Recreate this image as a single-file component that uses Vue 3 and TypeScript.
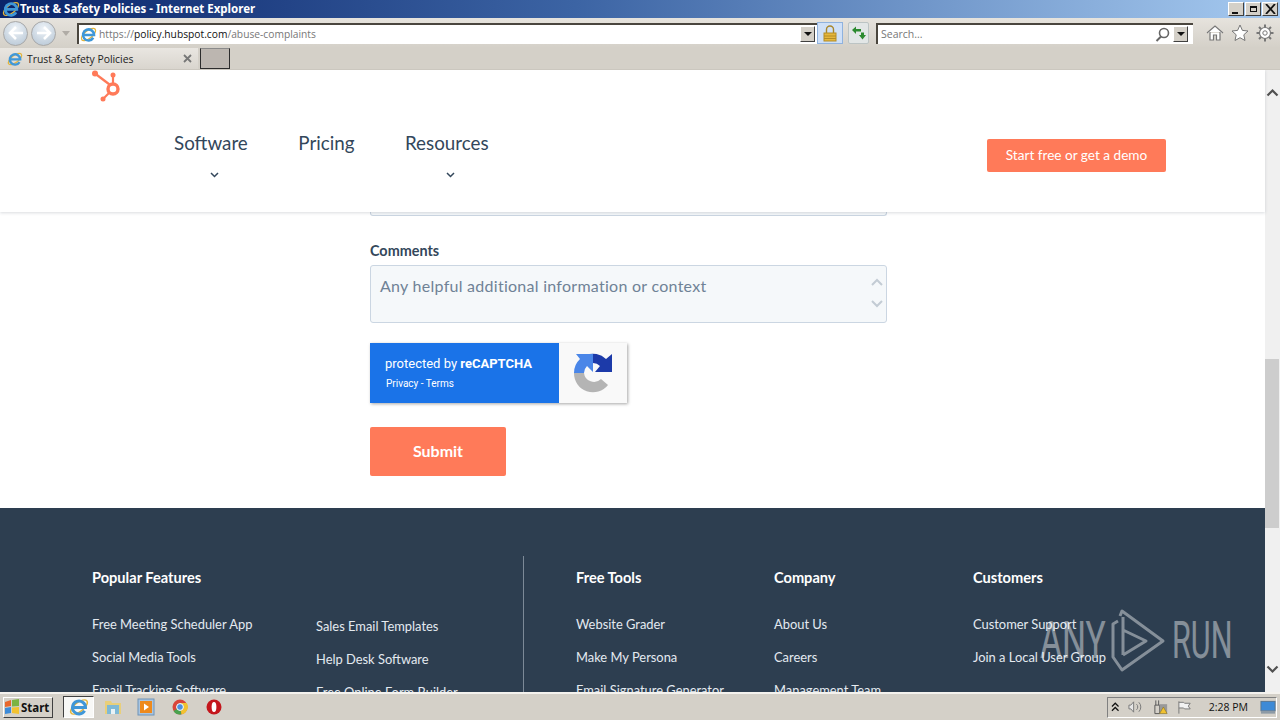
<script setup lang="ts">
const navItems = [
  { label: "Software", menu: true },
  { label: "Pricing", menu: false },
  { label: "Resources", menu: true },
];

const featuresA = ["Free Meeting Scheduler App", "Social Media Tools", "Email Tracking Software"];
const featuresB = ["Sales Email Templates", "Help Desk Software", "Free Online Form Builder"];

const footerCols = [
  { title: "Free Tools", width: 198, links: ["Website Grader", "Make My Persona", "Email Signature Generator"] },
  { title: "Company", width: 199, links: ["About Us", "Careers", "Management Team"] },
  { title: "Customers", width: 200, links: ["Customer Support", "Join a Local User Group"] },
];
</script>

<template>
  <div class="window">
    <svg class="defs" width="0" height="0">
      <symbol id="ie" viewBox="0 0 20 20">
        <ellipse cx="10" cy="10" rx="10" ry="4.500" transform="rotate(-38 10 10)" fill="none" stroke="#e3b53c" stroke-width="1.500" />
        <path d="M15.600 13.800A6.500 6.500 0 1 1 16.500 10.500H4" fill="none" stroke="#3f97d8" stroke-width="3" />
      </symbol>
    </svg>

    <div class="titlebar">
      <svg class="title-ie" width="18" height="18"><use href="#ie" /></svg>
      <span class="title-text">Trust &amp; Safety Policies - Internet Explorer</span>
      <div class="win-buttons">
        <span class="win-btn"><i class="min-glyph"></i></span>
        <span class="win-btn"><i class="max-glyph"></i></span>
        <span class="win-btn close-btn">
          <svg width="11" height="10" viewBox="0 0 11 10"><path d="M1 0l9 10M10 0L1 10" stroke="#111" stroke-width="1.800" /></svg>
        </span>
      </div>
    </div>

    <div class="toolbar">
      <div class="nav-orbs">
        <span class="orb">
          <svg width="16" height="14" viewBox="0 0 16 14"><path d="M8 1L2 7l6 6M2 7h13" fill="none" stroke="#fff" stroke-width="2.600" /></svg>
        </span>
        <span class="orb">
          <svg width="16" height="14" viewBox="0 0 16 14"><path d="M8 1l6 6-6 6M14 7H1" fill="none" stroke="#fff" stroke-width="2.600" /></svg>
        </span>
        <span class="orb-drop"></span>
      </div>
      <div class="addr-box">
        <svg width="17" height="17"><use href="#ie" /></svg>
        <span class="addr-text"><span class="dim">https://</span>policy.<b>hubspot.com</b><span class="dim">/abuse-complaints</span></span>
        <span class="drop-btn"><i></i></span>
      </div>
      <span class="lock-btn">
        <svg width="14" height="17" viewBox="0 0 14 17">
          <path d="M3.500 8V4.500a3.500 3.500 0 0 1 7 0V8" fill="none" stroke="#a8862c" stroke-width="1.400" />
          <rect x="1" y="8" width="12" height="8" fill="#e6b73c" stroke="#b48c26" />
          <path d="M1 11h12M1 13.500h12" stroke="#b48c26" />
        </svg>
      </span>
      <span class="refresh-btn">
        <svg width="16" height="14" viewBox="0 0 16 14">
          <path d="M1 4l4-3.500V3h5v2.500H5V8z" fill="#2c8a2f" />
          <path d="M15 9l-3.500 4.500L8 9h2V6.500h3V9z" fill="#2c8a2f" />
        </svg>
      </span>
      <div class="search-box">
        <span class="search-text">Search...</span>
        <svg class="search-icon" width="15" height="15" viewBox="0 0 15 15">
          <circle cx="9" cy="6" r="4.500" fill="none" stroke="#666" stroke-width="1.600" />
          <path d="M6 9.500L1.500 14" stroke="#666" stroke-width="2" />
        </svg>
        <span class="drop-btn"><i></i></span>
      </div>
      <div class="tool-icons">
        <svg width="18" height="18" viewBox="0 0 18 18">
          <path d="M1 9l8-7 8 7M4 8v8h3.500v-5h3v5H14V8" fill="#fff" stroke="#777" stroke-width="1.200" />
        </svg>
        <svg width="18" height="18" viewBox="0 0 18 18">
          <path d="M9 1l2.400 5.400 5.600.6-4.200 3.800 1.200 5.700L9 13.700 4 16.500l1.200-5.700L1 7l5.600-.6z" fill="#fff" stroke="#777" />
        </svg>
        <svg width="18" height="18" viewBox="0 0 18 18">
          <circle cx="9" cy="9" r="5.500" fill="#fff" stroke="#777" stroke-width="1.200" />
          <circle cx="9" cy="9" r="2.200" fill="none" stroke="#777" />
          <path d="M9 0.500v3M9 14.500v3M0.500 9h3M14.500 9h3M3 3l2 2M13 13l2 2M15 3l-2 2M5 13l-2 2" stroke="#777" stroke-width="2" />
        </svg>
      </div>
    </div>

    <div class="tabrow">
      <div class="tab">
        <svg width="16" height="16"><use href="#ie" /></svg>
        <span class="tab-title">Trust &amp; Safety Policies</span>
        <svg class="tab-close" width="9" height="9" viewBox="0 0 9 9"><path d="M1 1l7 7M8 1L1 8" stroke="#777" stroke-width="1.800" /></svg>
      </div>
      <div class="new-tab"></div>
    </div>

    <div class="viewport">
      <div class="page">
        <header class="site-header">
          <svg class="hs-logo" width="32" height="34" viewBox="0 0 32 34">
            <g fill="none" stroke="#ff7a59">
              <circle cx="22" cy="19" r="5" stroke-width="3.400" />
              <path d="M4 3.500l14.500 11" stroke-width="2.200" />
              <path d="M22 5v9" stroke-width="2.200" />
              <path d="M12 29l6.500-6.500" stroke-width="2.200" />
            </g>
            <g fill="#ff7a59">
              <circle cx="4" cy="3.500" r="3" />
              <circle cx="22" cy="5" r="2.500" />
              <circle cx="12" cy="29" r="2.500" />
            </g>
          </svg>
          <nav class="main-nav">
            <div v-for="item in navItems" :key="item.label" class="nav-item">
              <span class="nav-label">{{ item.label }}</span>
              <svg v-if="item.menu" class="nav-chevron" width="9" height="6" viewBox="0 0 9 6">
                <path d="M1 1l3.500 3.500L8 1" fill="none" stroke="#33475b" stroke-width="1.500" />
              </svg>
            </div>
          </nav>
          <a class="cta">Start free or get a demo</a>
        </header>

        <section class="form-area">
          <div class="input-stub"></div>
          <label class="field-label">Comments</label>
          <div class="textarea">
            <span>Any helpful additional information or context</span>
            <div class="ta-arrows">
              <svg width="12" height="8" viewBox="0 0 12 8"><path d="M1 7l5-5 5 5" fill="none" stroke="#c3ccd4" stroke-width="2" /></svg>
              <svg width="12" height="8" viewBox="0 0 12 8"><path d="M1 1l5 5 5-5" fill="none" stroke="#c3ccd4" stroke-width="2" /></svg>
            </div>
          </div>
          <div class="recaptcha">
            <div class="rc-blue">
              <div class="rc-line">protected by <b>reCAPTCHA</b></div>
              <div class="rc-links">Privacy - Terms</div>
            </div>
            <div class="rc-logo">
              <svg width="42" height="42" viewBox="0 0 42 42">
                <path d="M14 3A19 19 0 0 1 34 7l6-5v18H23l5-6a10 10 0 0 0-7-3z" fill="#1c3aa9" />
                <path d="M2 21A19 19 0 0 1 8 7L4 2h17v18l-6-6a10 10 0 0 0-3 7z" fill="#4a86e8" />
                <path d="M2 21h10a10 10 0 0 0 17 6l7 6A19 19 0 0 1 2 21z" fill="#b4b4b4" />
              </svg>
            </div>
          </div>
          <button class="submit">Submit</button>
        </section>

        <footer class="site-footer">
          <div class="features">
            <h4>Popular Features</h4>
            <div class="feature-cols">
              <ul>
                <li v-for="link in featuresA" :key="link">{{ link }}</li>
              </ul>
              <ul class="offset-list">
                <li v-for="link in featuresB" :key="link">{{ link }}</li>
              </ul>
            </div>
          </div>
          <div class="footer-rule"></div>
          <div v-for="col in footerCols" :key="col.title" class="footer-col" :style="{ width: col.width + 'px' }">
            <h4>{{ col.title }}</h4>
            <ul>
              <li v-for="link in col.links" :key="link">{{ link }}</li>
            </ul>
          </div>
        </footer>
      </div>

      <div class="scrollbar">
        <svg class="sb-arrow" width="13" height="9" viewBox="0 0 13 9"><path d="M1.500 7.500l5-5 5 5" fill="none" stroke="#505050" stroke-width="2.200" /></svg>
        <div class="sb-thumb"></div>
        <svg class="sb-arrow" width="13" height="9" viewBox="0 0 13 9"><path d="M1.500 1.500l5 5 5-5" fill="none" stroke="#505050" stroke-width="2.200" /></svg>
      </div>

      <div class="watermark">
        <span class="wm-word wm-any">ANY</span>
        <svg class="wm-logo" width="60" height="66" viewBox="0 0 60 66">
          <path d="M10 13L5 16v33l9 13 41-29L14 3l-2 5" fill="none" stroke="#fff" stroke-width="3" stroke-linejoin="round" />
          <path d="M15 9v26M15 47V22l23 11-23 14" fill="none" stroke="#fff" stroke-width="3" stroke-linejoin="round" />
        </svg>
        <span class="wm-word">RUN</span>
      </div>
    </div>

    <div class="taskbar">
      <button class="start">
        <svg width="16" height="16" viewBox="0 0 16 16">
          <path d="M1 3l6-2v6l-6 1z" fill="#e8672c" />
          <path d="M8 1l7-1v7l-7 .5z" fill="#7cb342" />
          <path d="M1 9l6-1v6l-6 1z" fill="#3d8bd8" />
          <path d="M8 8.500l7-.5v7l-7-1z" fill="#f2c230" />
        </svg>
        <span>Start</span>
      </button>
      <div class="task-active"><svg width="20" height="20"><use href="#ie" /></svg></div>
      <div class="task-icon">
        <svg width="18" height="18" viewBox="0 0 18 18">
          <path d="M1 3h6l1 2h9v11H1z" fill="#e9cf7a" />
          <path d="M3 7h12v9H3z" fill="#7fb9d6" />
          <path d="M7 11h4v5H7z" fill="#e9f2f6" />
        </svg>
      </div>
      <div class="task-icon">
        <svg width="18" height="18" viewBox="0 0 18 18">
          <rect x="1" y="1" width="16" height="16" fill="#a9c5e0" stroke="#6f93b8" />
          <rect x="3" y="3" width="12" height="12" fill="#ee8a1d" />
          <path d="M7 5.500l5 3.500-5 3.500z" fill="#fff" />
        </svg>
      </div>
      <div class="task-icon">
        <svg width="16" height="16" viewBox="0 0 16 16">
          <circle cx="8" cy="8" r="7.500" fill="#d9443a" />
          <path d="M8 8L1.500 12a7.500 7.500 0 0 0 8 3.300z" fill="#4aa24e" />
          <path d="M8 4h6.800a7.500 7.500 0 0 1-5.300 11.300L8 8z" fill="#f2c230" />
          <circle cx="8" cy="8" r="3.400" fill="#4d8fe0" stroke="#fff" />
        </svg>
      </div>
      <div class="task-icon">
        <svg width="16" height="16" viewBox="0 0 16 16">
          <circle cx="8" cy="8" r="7.500" fill="#c4161c" />
          <ellipse cx="8" cy="8" rx="2.400" ry="5" fill="#fff" />
        </svg>
      </div>
      <div class="tray">
        <svg width="9" height="10" viewBox="0 0 9 10"><path d="M1 4.500l3.500-3.500L8 4.500M1 9l3.500-3.500L8 9" fill="none" stroke="#111" stroke-width="1.300" /></svg>
        <svg width="16" height="14" viewBox="0 0 16 14">
          <path d="M1 5h2l3-3.500v11L3 9H1z" fill="#e6e6e6" stroke="#777" />
          <path d="M9 4a4 4 0 0 1 0 6M11.500 2a7 7 0 0 1 0 10" fill="none" stroke="#777" />
        </svg>
        <svg width="16" height="16" viewBox="0 0 16 16">
          <path d="M3 1v5M6 1v5M2 6h5v9H2z" fill="none" stroke="#555" />
          <rect x="7" y="5" width="8" height="10" fill="#999" />
          <path d="M11 8l4 7H7z" fill="#f2c230" stroke="#7a6410" stroke-width=".5" />
        </svg>
        <svg width="16" height="15" viewBox="0 0 16 15">
          <path d="M2 1v13M2 2h5l1 1h6l-2 3 2 3H8L7 8H2" fill="#f2f2f2" stroke="#777" />
        </svg>
        <span class="clock">2:28 PM</span>
        <svg class="desktop" width="17" height="15" viewBox="0 0 17 15">
          <rect x="1" y="1" width="15" height="10" fill="#3d8ad6" stroke="#56748f" />
          <rect x="1" y="11" width="15" height="3" fill="#8d9aa5" />
        </svg>
      </div>
    </div>
  </div>
</template>

<style>
html,
body {
  margin: 0;
  overflow: hidden;
}
</style>

<style scoped>
.window {
  width: 1280px;
  height: 720px;
  display: flex;
  flex-direction: column;
  background: #d4d0c8;
  font-family: "Open Sans", "Noto Sans", sans-serif;
  overflow: hidden;
}

.defs {
  position: absolute;
}

.titlebar {
  height: 18px;
  flex: none;
  display: flex;
  align-items: center;
  padding-left: 2px;
  background: linear-gradient(90deg, #0a246a 0%, #3c64a4 45%, #a6caf0 100%);
}

.title-text {
  font-family: "Noto Sans", sans-serif;
  font-size: 11.500px;
  font-weight: 700;
  line-height: 16px;
  color: #fff;
}

.win-buttons {
  margin-left: auto;
  display: flex;
  padding-right: 2px;
  gap: 1px;
}

.win-btn {
  width: 16px;
  height: 14px;
  box-sizing: border-box;
  background: #d4d0c8;
  border: 1px solid;
  border-color: #fff #404040 #404040 #fff;
  display: flex;
  align-items: center;
  justify-content: center;
  position: relative;
}

.min-glyph {
  width: 6px;
  height: 2px;
  background: #111;
  margin-top: 7px;
  margin-right: 3px;
}

.max-glyph {
  width: 7px;
  height: 6px;
  border: 1px solid #111;
  border-top-width: 2px;
  box-sizing: border-box;
}

.toolbar {
  height: 30px;
  flex: none;
  display: flex;
  align-items: center;
  background: linear-gradient(#e6e3dd, #d4d0c8);
}

.nav-orbs {
  width: 77px;
  display: flex;
  align-items: center;
  padding-left: 3px;
  gap: 3px;
  box-sizing: border-box;
}

.orb {
  width: 25px;
  height: 25px;
  border-radius: 50%;
  border: 1px solid #a8a8a8;
  box-sizing: border-box;
  background: radial-gradient(circle at 50% 30%, #eef3f8, #b4c4d3);
  display: flex;
  align-items: center;
  justify-content: center;
}

.orb-drop {
  width: 0;
  height: 0;
  margin-left: 3px;
  border: 4px solid transparent;
  border-top: 5px solid #b0aca6;
  border-bottom: 0;
}

.addr-box {
  width: 740px;
  height: 21px;
  box-sizing: border-box;
  background: #fff;
  border-top: 2px solid #4a463e;
  border-left: 2px solid #4a463e;
  display: flex;
  align-items: center;
  padding-left: 1px;
  padding-right: 2px;
}

.addr-text {
  margin-left: 2px;
  font-size: 10.250px;
  color: #111;
}

.addr-text b {
  font-weight: 400;
}

.dim {
  color: #777;
}

.drop-btn {
  margin-left: auto;
  width: 15px;
  height: 16px;
  box-sizing: border-box;
  background: #d4d0c8;
  border: 1px solid;
  border-color: #fff #404040 #404040 #fff;
  display: flex;
  align-items: center;
  justify-content: center;
}

.drop-btn i {
  border: 4px solid transparent;
  border-top: 4px solid #111;
  border-bottom: 0;
}

.lock-btn {
  width: 26px;
  height: 22px;
  background: #cfe0f7;
  border: 1px solid #8fb2de;
  box-sizing: border-box;
  display: flex;
  align-items: center;
  justify-content: center;
}

.refresh-btn {
  width: 21px;
  height: 22px;
  margin-left: 5px;
  background: #e2e6e6;
  border: 1px solid #bcc4c4;
  border-radius: 2px;
  box-sizing: border-box;
  display: flex;
  align-items: center;
  justify-content: center;
}

.search-box {
  width: 317px;
  height: 21px;
  margin-left: 7px;
  box-sizing: border-box;
  background: #fff;
  border-top: 2px solid #4a463e;
  border-left: 2px solid #4a463e;
  display: flex;
  align-items: center;
  padding-left: 3px;
  padding-right: 5px;
}

.search-text {
  font-size: 10.500px;
  color: #777;
}

.search-icon {
  margin-left: auto;
}

.search-box .drop-btn {
  margin-left: 3px;
}

.tool-icons {
  display: flex;
  gap: 7px;
  margin-left: 13px;
}

.tabrow {
  height: 22px;
  flex: none;
  display: flex;
  align-items: flex-start;
  background: #d4d0c8;
  border-bottom: 1px solid #cbc7bf;
  box-sizing: border-box;
}

.tab {
  width: 198px;
  height: 21px;
  display: flex;
  align-items: center;
  padding-left: 7px;
  box-sizing: border-box;
  background: linear-gradient(#e9e6e1, #d9d5ce);
}

.tab-title {
  margin-left: 4px;
  font-size: 10.400px;
  color: #222;
}

.tab-close {
  margin-left: auto;
  margin-right: 6px;
}

.new-tab {
  width: 30px;
  height: 21px;
  margin-left: 2px;
  box-sizing: border-box;
  background: #bcb6b0;
  border: 1px solid #2c2c2c;
  border-top-color: #8a8a8a;
}

.viewport {
  height: 622px;
  flex: none;
  display: flex;
  position: relative;
  overflow: hidden;
  background: #fff;
}

.page {
  width: 1265px;
  flex: none;
  font-family: Lato, "Open Sans", sans-serif;
  color: #33475b;
}

.site-header {
  height: 142px;
  box-sizing: border-box;
  display: flex;
  position: relative;
  z-index: 1;
  background: #fff;
  box-shadow: 0 1px 3px rgba(45, 62, 80, 0.18);
  padding-top: 61px;
  padding-left: 174px;
}

.hs-logo {
  position: absolute;
  left: 91px;
  top: 0;
}

.main-nav {
  display: flex;
  gap: 50.500px;
}

.nav-item {
  display: flex;
  flex-direction: column;
  align-items: center;
}

.nav-label {
  font-size: 18.800px;
  line-height: 24px;
}

.nav-chevron {
  margin-top: 17px;
  margin-left: 7px;
}

.cta {
  margin-left: auto;
  margin-right: 99px;
  margin-top: 8px;
  width: 179px;
  height: 33px;
  padding-bottom: 1px;
  box-sizing: border-box;
  display: flex;
  align-items: center;
  justify-content: center;
  background: #ff7a59;
  border-radius: 2px;
  color: #fff;
  font-size: 13.600px;
}

.form-area {
  height: 296px;
  box-sizing: border-box;
  padding-left: 370px;
  display: flex;
  flex-direction: column;
  align-items: flex-start;
}

.input-stub {
  width: 517px;
  height: 4px;
  box-sizing: border-box;
  background: #f5f8fa;
  border: 1px solid #cbd6e2;
  border-top: 0;
  border-radius: 0 0 3px 3px;
}

.field-label {
  margin-top: 26px;
  font-size: 14.400px;
  font-weight: 700;
  line-height: 17px;
}

.textarea {
  width: 517px;
  height: 58px;
  margin-top: 6px;
  box-sizing: border-box;
  display: flex;
  justify-content: space-between;
  padding: 10px 3px 0 9px;
  background: #f5f8fa;
  border: 1px solid #cbd6e2;
  border-radius: 3px;
  color: #6f8296;
  font-size: 16px;
  letter-spacing: 0.27px;
  line-height: 20px;
}

.ta-arrows {
  display: flex;
  flex-direction: column;
  gap: 14px;
  padding-top: 2px;
}

.recaptcha {
  width: 257px;
  height: 60px;
  margin-top: 20px;
  display: flex;
  box-shadow: 1px 1px 3px rgba(0, 0, 0, 0.35);
  background: #f9f9f9;
}

.rc-blue {
  width: 189px;
  background: #1a73e8;
  color: #fff;
  font-family: Roboto, sans-serif;
  padding: 12px 0 0 15px;
  box-sizing: border-box;
}

.rc-line {
  font-size: 13px;
  line-height: 17px;
}

.rc-links {
  margin-top: 5px;
  padding-left: 1px;
  font-size: 10px;
  line-height: 13px;
}

.rc-logo {
  flex: 1;
  display: flex;
  align-items: center;
  justify-content: center;
}

.submit {
  width: 136px;
  height: 49px;
  margin-top: 24px;
  padding: 0 0 2px;
  border: 0;
  border-radius: 2px;
  background: #ff7a59;
  color: #fff;
  font-family: Lato, sans-serif;
  font-size: 16px;
  font-weight: 700;
}

.site-footer {
  height: 300px;
  box-sizing: border-box;
  background: #2d3e50;
  padding: 48px 0 0 92px;
  display: flex;
  color: #fff;
}

.site-footer h4 {
  margin: 13px 0 0;
  font-size: 14.600px;
  font-weight: 700;
  line-height: 17px;
}

.site-footer ul {
  list-style: none;
  margin: 30px 0 0;
  padding: 0;
}

.site-footer li {
  font-size: 12.900px;
  line-height: 17px;
  margin-bottom: 16px;
  color: #e4eaf0;
  white-space: nowrap;
}

.features {
  width: 431px;
  flex: none;
}

.feature-cols {
  display: flex;
}

.feature-cols ul {
  width: 224px;
  flex: none;
}

.feature-cols .offset-list {
  margin-top: 32px;
}

.footer-rule {
  width: 1px;
  height: 240px;
  flex: none;
  background: #7c8997;
}

.footer-col {
  flex: none;
}

.footer-rule + .footer-col {
  margin-left: 52px;
}

.scrollbar {
  flex: 1;
  position: relative;
  background: #f0f0f0;
  display: flex;
  flex-direction: column;
  align-items: center;
  justify-content: space-between;
  padding: 18px 0;
}

.sb-thumb {
  position: absolute;
  left: 0;
  right: 1px;
  top: 289px;
  height: 169px;
  background: #cdcdcd;
}

/* watermark laid over the footer, word glyphs squeezed to the narrow logo type */
.watermark {
  position: absolute;
  left: 1040px;
  top: 538px;
  display: flex;
  align-items: center;
  opacity: 0.42;
  color: #fff;
  font-family: Roboto, sans-serif;
  font-size: 51px;
  line-height: 66px;
  pointer-events: none;
}

.wm-word {
  width: 64px;
  display: inline-block;
  white-space: nowrap;
  transform: scaleX(0.6);
  transform-origin: 0 50%;
}

.wm-any {
  transform: scaleX(0.66);
}

.wm-logo {
  margin: 0 4px 0 4px;
}

.taskbar {
  height: 28px;
  flex: none;
  display: flex;
  align-items: center;
  background: #d4d0c8;
  border-top: 2px solid #f4f2ee;
  box-sizing: border-box;
  padding-left: 3px;
}

.start {
  width: 50px;
  height: 21px;
  padding: 0;
  display: flex;
  align-items: center;
  gap: 1px;
  background: #d4d0c8;
  border: 1px solid;
  border-color: #fff #404040 #404040 #fff;
  font-family: "Noto Sans", sans-serif;
  font-size: 11.500px;
  font-weight: 700;
  color: #111;
}

.task-active {
  width: 31px;
  height: 22px;
  margin-left: 10px;
  background: #f8f8f6;
  border: 1px solid;
  border-color: #404040 #fff #fff #404040;
  box-sizing: border-box;
  display: flex;
  align-items: center;
  justify-content: center;
}

.task-icon {
  width: 20px;
  display: flex;
  justify-content: center;
  margin-left: 13px;
}

.task-active + .task-icon {
  margin-left: 9px;
}

.task-icon:nth-child(5),
.task-icon:nth-child(6) {
  margin-left: 14px;
}

.tray {
  margin-left: auto;
  margin-right: 3px;
  width: 170px;
  height: 21px;
  box-sizing: border-box;
  display: flex;
  align-items: center;
  gap: 9px;
  padding-left: 3px;
  border: 1px solid;
  border-color: #808080 #fff #fff #808080;
}

.clock {
  margin-left: 8px;
  font-size: 10.500px;
  color: #111;
  white-space: nowrap;
}

.desktop {
  margin-left: 3px;
}
</style>
